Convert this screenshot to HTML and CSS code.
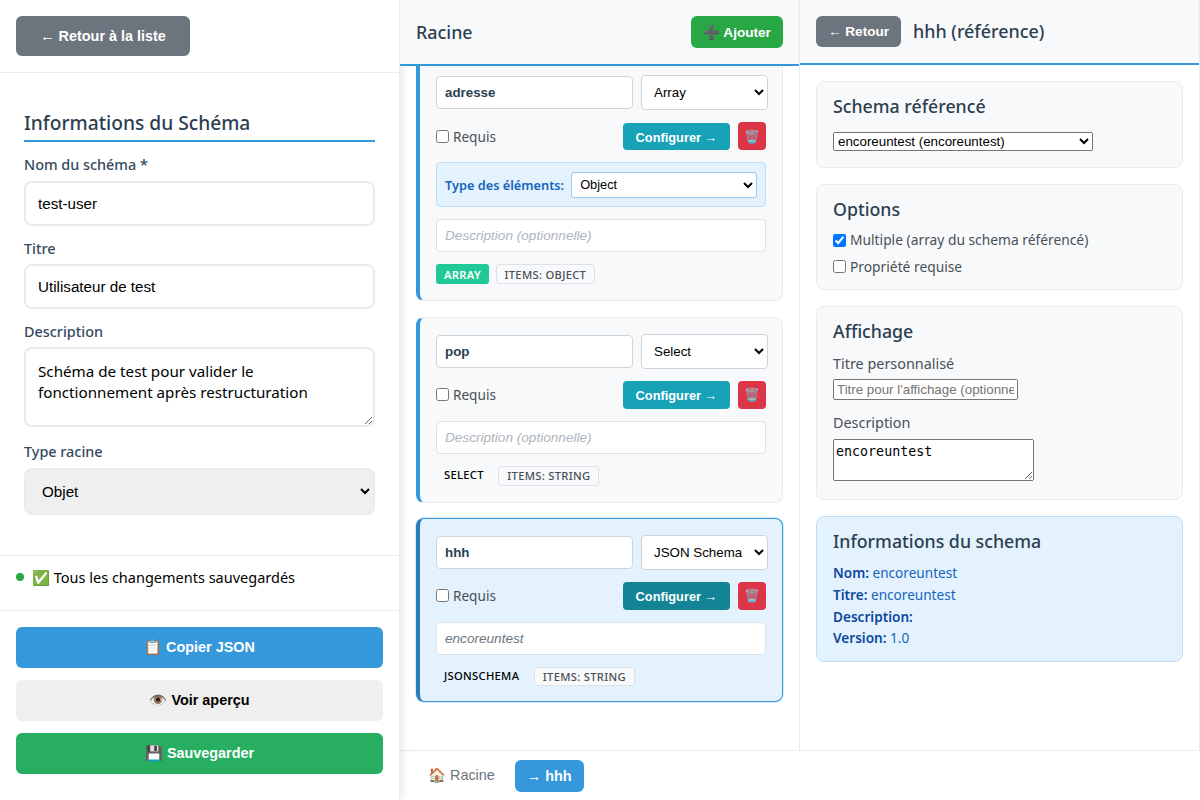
FILE: index.html
```html
<!DOCTYPE html>
<html lang="fr">

<head>
	<meta charset="utf-8" />
	<title>Éditeur de schéma</title>
	<link rel="stylesheet" href="styles.css">
</head>

<body>
	<div class="app">
		<aside class="sidebar">
			<div class="sidebar-top">
				<button class="btn btn-back-large">← Retour à la liste</button>
			</div>
			<form class="schema-form">
				<h2 class="section-title">Informations du Schéma</h2>
				<label class="form-label" for="schema-name">Nom du schéma *</label>
				<input class="form-input" id="schema-name" type="text" value="test-user" />
				<label class="form-label" for="schema-title">Titre</label>
				<input class="form-input" id="schema-title" type="text" value="Utilisateur de test" />
				<label class="form-label" for="schema-desc">Description</label>
				<textarea class="form-input form-textarea" id="schema-desc">Schéma de test pour valider le fonctionnement après restructuration</textarea>
				<label class="form-label" for="schema-type">Type racine</label>
				<select class="form-select" id="schema-type">
					<option>Objet</option>
				</select>
			</form>
			<div class="save-status">
				<span class="status-dot"></span>
				<span>✅ Tous les changements sauvegardés</span>
			</div>
			<div class="sidebar-actions">
				<button class="btn action-btn action-copy">📋 Copier JSON</button>
				<button class="btn action-btn action-preview">👁️ Voir aperçu</button>
				<button class="btn action-btn action-save">💾 Sauvegarder</button>
			</div>
		</aside>

		<main class="workspace">
			<div class="columns">
				<section class="column column-root">
					<header class="column-header header-root">
						<h3 class="column-title">Racine</h3>
						<button class="btn btn-add">➕ Ajouter</button>
					</header>
					<div class="field-list">
						<article class="field-card">
							<div class="field-row">
								<input class="field-name" type="text" value="adresse" />
								<select class="field-type"><option>Array</option></select>
							</div>
							<div class="field-controls">
								<label class="required-check"><input type="checkbox" />Requis</label>
								<button class="btn btn-configure">Configurer →</button>
								<button class="btn btn-delete">🗑️</button>
							</div>
							<div class="items-type">
								<label class="items-label">Type des éléments:</label>
								<select class="items-select"><option>Object</option></select>
							</div>
							<input class="field-desc" type="text" placeholder="Description (optionnelle)" />
							<div class="badges">
								<span class="badge badge-array">ARRAY</span>
								<span class="badge badge-items">ITEMS: OBJECT</span>
							</div>
						</article>

						<article class="field-card">
							<div class="field-row">
								<input class="field-name" type="text" value="pop" />
								<select class="field-type"><option>Select</option></select>
							</div>
							<div class="field-controls">
								<label class="required-check"><input type="checkbox" />Requis</label>
								<button class="btn btn-configure">Configurer →</button>
								<button class="btn btn-delete">🗑️</button>
							</div>
							<input class="field-desc" type="text" placeholder="Description (optionnelle)" />
							<div class="badges">
								<span class="badge badge-plain">SELECT</span>
								<span class="badge badge-items">ITEMS: STRING</span>
							</div>
						</article>

						<article class="field-card field-selected">
							<div class="field-row">
								<input class="field-name" type="text" value="hhh" />
								<select class="field-type"><option>JSON Schema</option></select>
							</div>
							<div class="field-controls">
								<label class="required-check"><input type="checkbox" />Requis</label>
								<button class="btn btn-configure">Configurer →</button>
								<button class="btn btn-delete">🗑️</button>
							</div>
							<input class="field-desc" type="text" value="encoreuntest" />
							<div class="badges">
								<span class="badge badge-plain">JSONSCHEMA</span>
								<span class="badge badge-items">ITEMS: STRING</span>
							</div>
						</article>
					</div>
				</section>

				<section class="column column-detail">
					<header class="column-header header-detail">
						<button class="btn btn-back">← Retour</button>
						<h3 class="column-title">hhh (référence)</h3>
					</header>
					<div class="detail-body">
						<div class="panel">
							<h4 class="panel-title">Schema référencé</h4>
							<select class="ref-select"><option>encoreuntest (encoreuntest)</option></select>
						</div>
						<div class="panel">
							<h4 class="panel-title">Options</h4>
							<label class="option-check"><input type="checkbox" checked />Multiple (array du schema référencé)</label>
							<label class="option-check"><input type="checkbox" />Propriété requise</label>
						</div>
						<div class="panel">
							<h4 class="panel-title">Affichage</h4>
							<label class="panel-label">Titre personnalisé</label>
							<input class="plain-input" type="text" placeholder="Titre pour l'affichage (optionnel)" />
							<label class="panel-label">Description</label>
							<textarea class="plain-textarea">encoreuntest</textarea>
						</div>
						<div class="panel panel-info">
							<h4 class="panel-title">Informations du schema</h4>
							<p class="info-line"><strong>Nom:</strong> encoreuntest</p>
							<p class="info-line"><strong>Titre:</strong> encoreuntest</p>
							<p class="info-line"><strong>Description:</strong></p>
							<p class="info-line"><strong>Version:</strong> 1.0</p>
						</div>
					</div>
				</section>
			</div>
			<nav class="breadcrumb">
				<button class="crumb">🏠 Racine</button>
				<button class="crumb crumb-active">→ hhh</button>
			</nav>
		</main>
	</div>
</body>

</html>
```

FILE: styles.css
```css
* {
	box-sizing: border-box;
}

body {
	margin: 0;
	font-family: "Noto Sans", sans-serif;
	color: #000;
	background: #fff;
}

button, input, select {
	font-family: "Liberation Sans", sans-serif;
}

.app {
	display: flex;
	height: 800px;
	overflow: hidden;
}

.btn {
	border: none;
	border-radius: 6px;
	font-weight: 600;
	color: #fff;
	cursor: pointer;
}

/* sidebar */

.sidebar {
	width: 400px;
	flex-shrink: 0;
	display: flex;
	flex-direction: column;
	border-right: 1px solid #e9ecef;
	box-shadow: 2px 0 8px rgba(0, 0, 0, 0.1);
	background: #fff;
	position: relative;
}

.sidebar-top {
	padding: 16px;
	height: 73px;
	border-bottom: 1px solid #e9ecef;
}

.btn-back-large {
	display: block;
	width: 174px;
	height: 40px;
	font-size: 14.4px;
	background: #6c757d;
}

.schema-form {
	flex: 1;
	padding: 24px 24px 0;
}

.section-title {
	margin: 12px 0 13px;
	padding-bottom: 4px;
	font-size: 19.2px;
	line-height: 27px;
	font-weight: 500;
	color: #2c3e50;
	border-bottom: 2px solid #3498db;
}

.form-label {
	display: block;
	margin-bottom: 6px;
	font-size: 14.4px;
	line-height: 20px;
	font-weight: 500;
	color: #34495e;
}

.form-input {
	display: block;
	width: 100%;
	height: 45px;
	margin-bottom: 13px;
	padding: 12px;
	border: 2px solid #e9ecef;
	border-radius: 8px;
	font-size: 15.2px;
	color: #000;
	background: #fff;
}

.form-input + .form-label {
	margin-bottom: 5px;
}

.form-textarea {
	height: 80px;
	margin-bottom: 15px;
	font-family: "Noto Sans", sans-serif;
	line-height: 21px;
	padding-top: 12px;
	resize: vertical;
}

.form-textarea + .form-label {
	margin-bottom: 6px;
}

.form-select {
	display: block;
	width: 100%;
	height: 47px;
	padding: 12px;
	border: 2px solid #e9ecef;
	border-radius: 8px;
	font-size: 15.2px;
	color: #000;
	background: #efefef;
}

.save-status {
	display: flex;
	align-items: center;
	gap: 8px;
	height: 56px;
	padding: 0 16px 12px;
	border-top: 1px solid #e9ecef;
	border-bottom: 1px solid #e9ecef;
	font-size: 14.5px;
}

.status-dot {
	width: 8px;
	height: 8px;
	border-radius: 50%;
	background: #28a745;
}

.sidebar-actions {
	display: flex;
	flex-direction: column;
	gap: 12px;
	padding: 16px 16px 26px;
}

.action-btn {
	height: 41px;
	font-size: 14.4px;
}

.action-copy {
	background: #3498db;
}

.action-preview {
	background: #efefef;
	color: #000;
}

.action-save {
	background: #27ae60;
}

/* columns */

.workspace {
	flex: 1;
	display: flex;
	flex-direction: column;
	min-width: 0;
}

.columns {
	flex: 1;
	display: flex;
	min-height: 0;
}

.column {
	width: 400px;
	display: flex;
	flex-direction: column;
	border-right: 1px solid #e9ecef;
	overflow: hidden;
}

.column-header {
	display: flex;
	align-items: center;
	flex-shrink: 0;
	padding: 0 16px;
	background: #f8f9fa;
	border-bottom: 2px solid #3498db;
	position: relative;
}

.header-root {
	height: 66px;
	justify-content: space-between;
}

.header-detail {
	height: 65px;
	gap: 12px;
}

.column-title {
	margin: 0;
	font-size: 17.9px;
	font-weight: 500;
	color: #2c3e50;
}

.header-detail .column-title {
	margin-bottom: 2px;
}

.btn-add {
	width: 92px;
	height: 32px;
	font-size: 13.6px;
	background: #28a745;
}

.btn-back {
	width: 85px;
	height: 31px;
	font-size: 13.6px;
	background: #6c757d;
}

/* field cards */

.field-list {
	display: flex;
	flex-direction: column;
	gap: 15.5px;
	margin-top: -8px;
	padding: 0 16px;
}

.field-card {
	display: flex;
	flex-direction: column;
	padding: 16px;
	background: #f8f9fa;
	border: 1px solid #e9ecef;
	border-left: 4px solid #3498db;
	border-radius: 8px;
}

.field-selected {
	margin-top: -0.3px;
	padding-bottom: 15px;
	background: #e3f2fd;
	border-color: #3498db;
	border-left-color: #2980b9;
	box-shadow: 0 0 0 1px rgba(52, 152, 219, 0.2);
}

.field-row {
	display: flex;
	align-items: center;
	gap: 8px;
	margin-right: -2px;
}

.field-name {
	width: 197px;
	height: 33px;
	padding: 0 8px;
	border: 1px solid #ced4da;
	border-radius: 4px;
	font-size: 13.33px;
	font-weight: 600;
	color: #2c3e50;
	background: #fff;
}

.field-type {
	width: 127px;
	height: 35px;
	padding: 0 8px;
	border: 1px solid #ced4da;
	border-radius: 4px;
	font-size: 13.33px;
	color: #000;
	background: #fff;
}

.field-controls {
	display: flex;
	align-items: center;
	gap: 8px;
	margin: 12px 0;
}

.required-check {
	flex: 1;
	display: flex;
	align-items: center;
	gap: 4px;
	font-size: 13.6px;
	color: #495057;
}

.required-check input {
	width: 13px;
	height: 13px;
	margin: 0;
}

.btn-configure {
	align-self: flex-end;
	width: 107px;
	height: 27.5px;
	padding: 2px 6px 0;
	font-size: 12.8px;
	border-radius: 4px;
	background: #17a2b8;
}

.field-selected .btn-configure {
	background: #138496;
}

.btn-delete {
	width: 28px;
	height: 28px;
	padding: 0;
	font-size: 12.8px;
	background: #dc3545;
	border-radius: 4px;
}

.items-type {
	display: flex;
	align-items: center;
	gap: 7px;
	height: 45px;
	margin-bottom: 12px;
	padding: 0 8px;
	background: #e3f2fd;
	border: 1px solid #bbdefb;
	border-radius: 4px;
}

.items-label {
	font-size: 12.75px;
	font-weight: 600;
	color: #1565c0;
	white-space: nowrap;
}

.items-select {
	flex: 1;
	min-width: 0;
	height: 26px;
	padding: 0 4px;
	border: 1px solid #90caf9;
	border-radius: 3px;
	font-size: 12.8px;
	color: #000;
	background: #fff;
}

.field-desc {
	width: 100%;
	height: 33px;
	padding: 0 8px;
	border: 1px solid #dee2e6;
	border-radius: 4px;
	font-size: 13.6px;
	font-style: italic;
	color: #6c757d;
	background: #fff;
}

.field-desc::placeholder {
	color: #adb5bd;
}

.badges {
	display: flex;
	align-items: center;
	gap: 6.5px;
	margin-top: 12px;
}

.badge {
	padding: 0 8px;
	height: 20px;
	display: flex;
	align-items: center;
	border-radius: 3px;
	font-size: 11.2px;
	letter-spacing: 0.3px;
	font-weight: 500;
}

.badge-array {
	background: #20c997;
	color: #fff;
	font-weight: 600;
	letter-spacing: 0.3px;
}

.badge-plain {
	color: #000;
	margin-top: -2px;
}

.badge-items {
	background: #f8f9fa;
	border: 1px solid #dee2e6;
	color: #495057;
}

.field-selected .badge-items {
	height: 19px;
}

/* detail */

.detail-body {
	display: flex;
	flex-direction: column;
	gap: 16px;
	padding: 16px;
}

.panel {
	padding: 12px 16px 16px;
	background: #f8f9fa;
	border: 1px solid #e9ecef;
	border-radius: 8px;
}

.panel-title {
	margin: 0 0 12px;
	font-size: 17.75px;
	line-height: 24px;
	font-weight: 500;
	color: #2c3e50;
}

.ref-select {
	display: block;
	width: 260px;
	height: 19px;
	margin-top: 14px;
	font-size: 13.33px;
}

.option-check {
	display: flex;
	align-items: center;
	gap: 4px;
	height: 14px;
	margin-bottom: 13px;
	font-size: 13.8px;
	line-height: 14px;
	color: #495057;
}

.option-check:last-child {
	height: 13px;
	margin-bottom: 0;
}

.option-check input {
	width: 13px;
	height: 13px;
	margin: 0;
}

.panel-label {
	display: block;
	margin-top: -1px;
	margin-bottom: 5px;
	font-size: 14.4px;
	line-height: 20px;
	color: #495057;
}

.plain-input {
	display: block;
	width: 185px;
	height: 21px;
	margin-bottom: 14px;
	font-size: 13.33px;
}

.plain-textarea {
	display: block;
	width: 201px;
	height: 42px;
	margin-top: 6px;
	margin-bottom: 2px;
	padding-top: 4px;
	font-family: "DejaVu Sans Mono", monospace;
	font-size: 13.33px;
}

.panel-info {
	padding-bottom: 13.7px;
	background: #e3f2fd;
	border-color: #bbdefb;
}

.panel-info .panel-title {
	margin-bottom: 11.3px;
}

.info-line {
	margin: 0 0 3.67px;
	font-size: 13.6px;
	line-height: 18px;
	color: #1565c0;
}

.info-line:last-child {
	margin-bottom: 0;
}

.info-line strong {
	font-weight: 600;
	color: #0d47a1;
}

/* breadcrumb */

.breadcrumb {
	display: flex;
	align-items: center;
	gap: 8px;
	height: 50px;
	flex-shrink: 0;
	padding: 0 16px;
	background: #fff;
	border-top: 1px solid #e9ecef;
}

.crumb {
	height: 32px;
	padding: 0 12px;
	border: none;
	border-radius: 6px;
	background: none;
	font-size: 14.4px;
	color: #6c757d;
}

.crumb-active {
	background: #3498db;
	color: #fff;
	font-weight: 600;
}
```
